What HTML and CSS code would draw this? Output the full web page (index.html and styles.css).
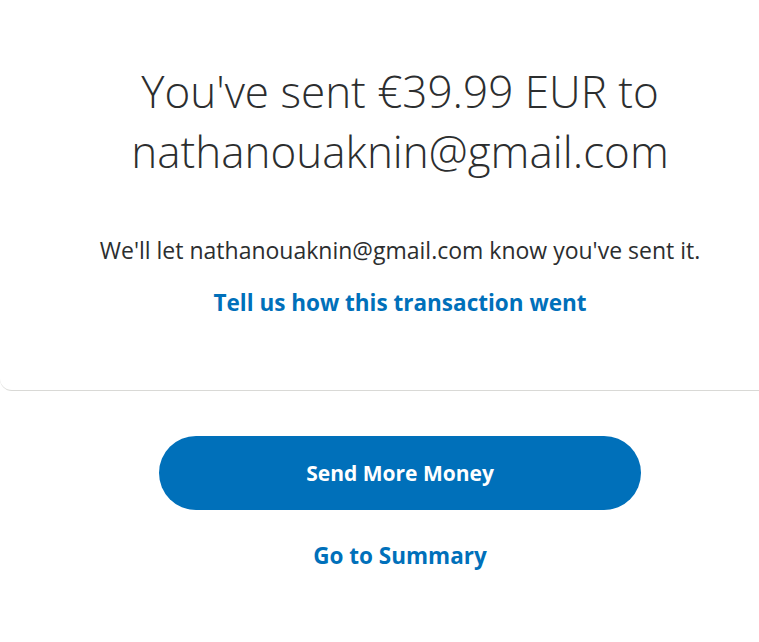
FILE: index.html
```html
<!DOCTYPE html>
<html lang="en">
<head>
<meta charset="utf-8">
<title>Sent</title>
<link rel="stylesheet" href="styles.css">
</head>
<body>
<div class="page">
  <section class="card">
    <h1 class="title">You've sent €39.99 EUR to<br>nathanouaknin@gmail.com</h1>
    <p class="note">We'll let nathanouaknin@gmail.com know you've sent it.</p>
    <a class="link feedback" href="#">Tell us how this transaction went</a>
  </section>
  <div class="actions">
    <a class="btn-primary" href="#">Send More Money</a>
    <a class="link summary" href="#">Go to Summary</a>
  </div>
</div>
</body>
</html>
```

FILE: styles.css
```css
html, body {
  margin: 0;
  padding: 0;
  background: #ffffff;
  overflow: hidden;
}
body {
  font-family: "Open Sans", "Noto Sans", sans-serif;
  color: #2c2e2f;
}
.page {
  width: 100%;
}
.card {
  display: flex;
  flex-direction: column;
  align-items: center;
  text-align: center;
  padding: 61px 0 72px 41px;
  border-bottom: 1px solid #d9d9d6;
  border-radius: 0 0 0 12px;
}
.title {
  margin: 0;
  font-weight: 300;
  font-size: 44px;
  line-height: 60px;
  color: #2c2e2f;
  white-space: nowrap;
}
.note {
  margin: 53px 0 0;
  font-size: 23px;
  line-height: 32px;
  white-space: nowrap;
}
.link {
  color: #0070ba;
  font-weight: 700;
  font-size: 22.5px;
  line-height: 30px;
  text-decoration: none;
  white-space: nowrap;
}
.feedback {
  margin-top: 22px;
}
.actions {
  display: flex;
  flex-direction: column;
  align-items: center;
  padding: 45px 0 0 41px;
}
.btn-primary {
  display: flex;
  align-items: center;
  justify-content: center;
  width: 482px;
  height: 74px;
  border-radius: 37px;
  background: #0070ba;
  color: #fff;
  font-weight: 700;
  font-size: 21px;
  text-decoration: none;
}
.summary {
  margin-top: 31px;
}
```
